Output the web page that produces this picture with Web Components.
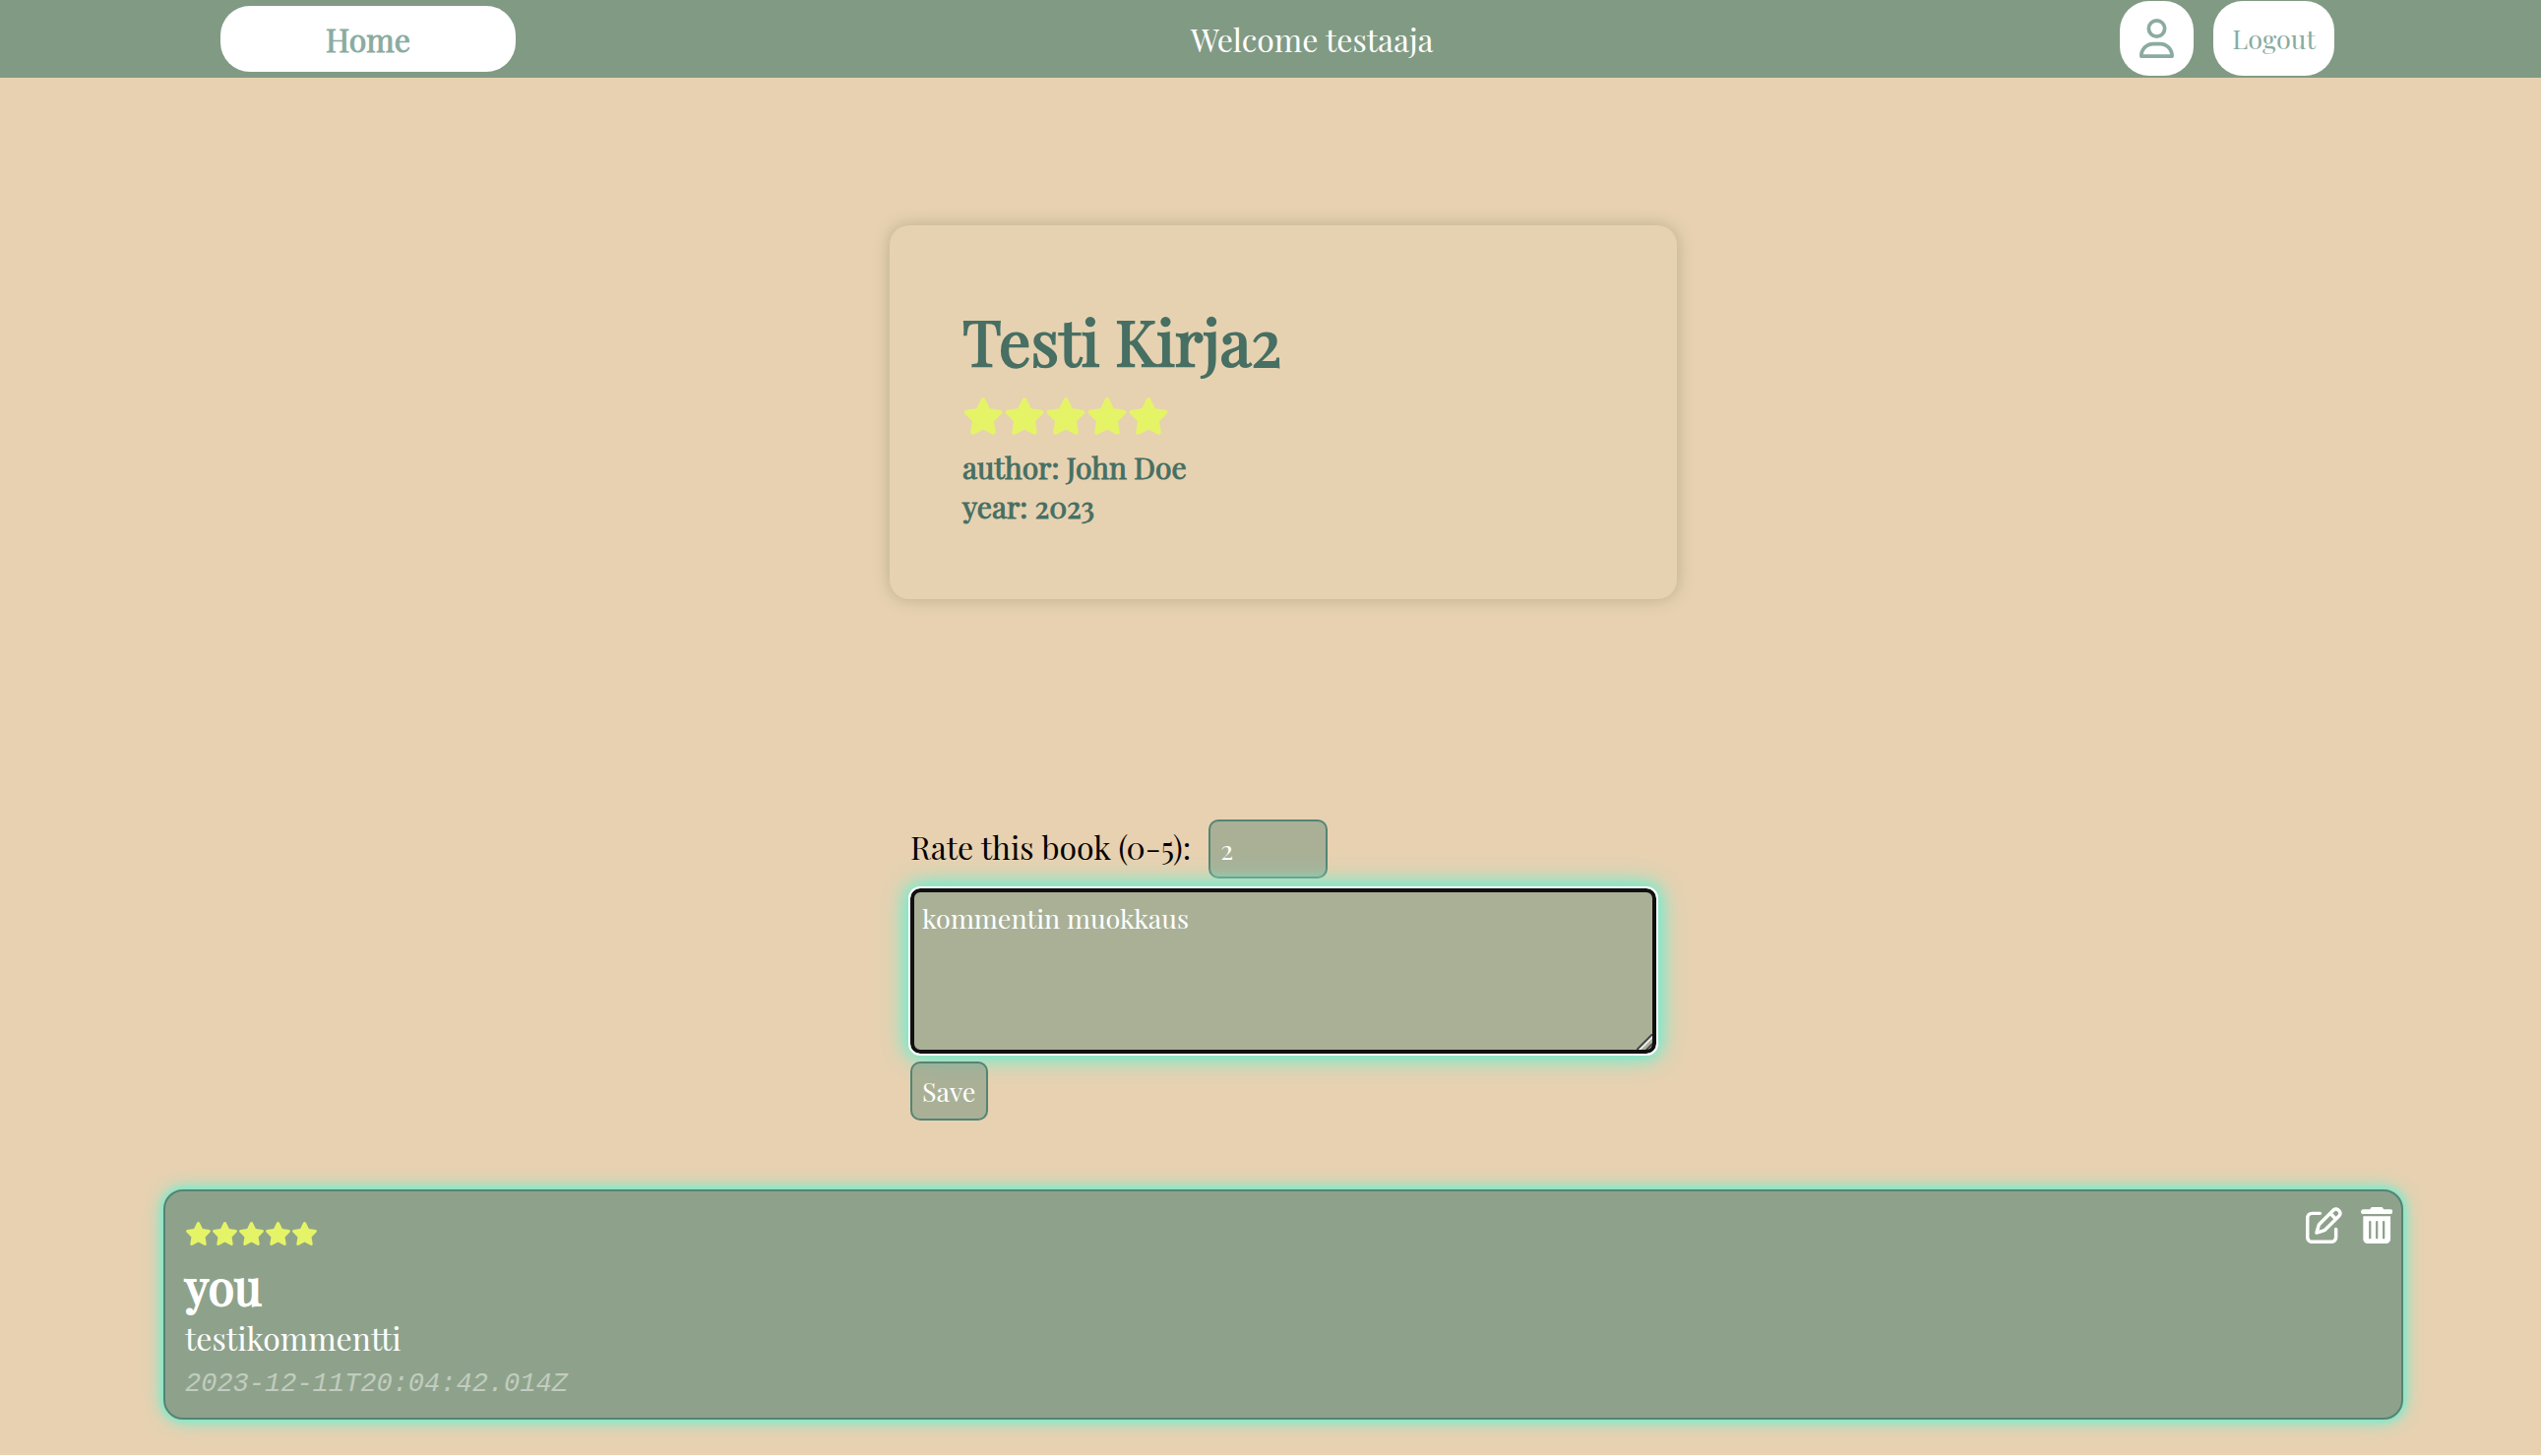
<!DOCTYPE html>
<html lang="en">
<head>
<meta charset="utf-8">
<title>Book review</title>
<style>
  html { background: #fff; }
  body {
    margin: 0;
    font-family: "Playfair Display", "Liberation Serif", serif;
    color: #000;
    --bar: #819a84;
    --sand: #e7d1b1;
    --ink: #476f63;
    --soft: #8aaba1;
    --field: rgba(129, 154, 132, .6);
    --edge: #548474;
    --glow: #73ecce;
    --star: #e5f467;
  }
</style>
</head>
<body>
<book-app></book-app>
<script>
const define = (name, html, setup) => {
  const template = document.createElement('template');
  template.innerHTML = html;
  customElements.define(name, class extends HTMLElement {
    constructor() {
      super();
      this.attachShadow({ mode: 'open' }).append(template.content.cloneNode(true));
    }
    connectedCallback() { if (setup) setup(this, this.shadowRoot); }
  });
};

const STAR = '<svg viewBox="0 0 576 512" aria-hidden="true"><path d="M316.9 18C311.6 7 300.4 0 288.1 0s-23.4 7-28.8 18L195 150.3 51.4 171.5c-12 1.8-22 10.2-25.7 21.7s-.7 24.2 7.9 32.7L137.8 329 113.2 474.7c-2 12 3 24.2 12.9 31.3s23 8 33.8 2.3l128.3-68.5 128.3 68.5c10.8 5.7 23.9 4.9 33.8-2.3s14.9-19.3 12.9-31.3L438.5 329 542.7 225.9c8.6-8.5 11.7-21.2 7.9-32.7s-13.7-19.9-25.7-21.7L381.2 150.3 316.9 18z"/></svg>';

define('star-rating', `
  <style>
    :host { display: block; }
    .stars { display: flex; }
    svg { width: var(--star-width, 27px); height: var(--star-height, 24px); fill: var(--star); display: block; }
  </style>
  <div class="stars" role="img"></div>`,
  (host, root) => {
    const value = Number(host.getAttribute('value'));
    const stars = root.querySelector('.stars');
    stars.setAttribute('aria-label', value + ' of 5');
    stars.innerHTML = STAR.repeat(value);
  });

define('top-bar', `
  <style>
    :host { display: flex; justify-content: space-between; align-items: center; background: var(--bar); padding: 1px 210px 2px 224px; }
    a, button { box-sizing: border-box; background: #fff; color: var(--soft); border: 0; border-radius: 30px; font-family: inherit; line-height: 36px; text-align: center; text-decoration: none; }
    .home { width: 300px; padding: 16px 20px 15px; font-size: 32px; -webkit-text-stroke: 1px currentColor; }
    .welcome { color: #fff; font-size: 32px; line-height: 40px; padding: 2px 12px 0 0; }
    .account { display: flex; gap: 20px; }
    .user { display: flex; align-items: center; padding: 18px 20px; }
    .user svg { width: 35px; height: 40px; fill: currentColor; display: block; }
    .logout { padding: 20px 19px; font-size: 27px; }
  </style>
  <a class="home" href="#">Home</a>
  <span class="welcome"><slot></slot></span>
  <div class="account">
    <a class="user" href="#" aria-label="Profile"><svg viewBox="0 0 448 512" aria-hidden="true"><path d="M304 128a80 80 0 1 0-160 0 80 80 0 1 0 160 0zM96 128a128 128 0 1 1 256 0A128 128 0 1 1 96 128zM49.3 464H398.7c-8.9-63.3-63.3-112-129-112H178.3c-65.7 0-120.1 48.7-129 112zM0 482.3C0 383.8 79.8 304 178.3 304h91.4C368.2 304 448 383.8 448 482.3c0 16.4-13.3 29.7-29.7 29.7H29.7C13.3 512 0 498.7 0 482.3z"/></svg></a>
    <button class="logout" type="button">Logout</button>
  </div>`);

define('book-card', `
  <style>
    :host { display: block; box-sizing: border-box; width: 100%; max-width: 800px; padding: 77px 74px 74px; border-radius: 20px; background: #e6d2b1; box-shadow: 0 0 16px rgba(129, 130, 90, .45); color: var(--ink); }
    h1 { margin: 0; font-size: 64px; line-height: 80px; font-weight: normal; -webkit-text-stroke: 2px currentColor; }
    star-rating { --star-width: 42px; --star-height: 38px; margin: 18px 0 13px; }
    ::slotted(p) { margin: 0; font-size: 30px; line-height: 40px; -webkit-text-stroke: 1px currentColor; }
  </style>
  <h1><slot name="title"></slot></h1>
  <star-rating value="5"></star-rating>
  <slot></slot>`);

define('rating-form', `
  <style>
    :host { display: block; width: 100%; max-width: 758px; }
    form { display: flex; flex-direction: column; align-items: flex-start; }
    .row { display: flex; align-items: baseline; gap: 18px; margin-bottom: 10px; }
    label { font-size: 32px; line-height: 40px; }
    input, textarea, button { box-sizing: border-box; margin: 0; font-family: inherit; font-size: 27px; line-height: 36px; color: #fff; background: var(--field); border: 2px solid var(--edge); border-radius: 10px; }
    input { width: 121px; height: 60px; padding: 0 10px; appearance: textfield; }
    textarea { display: block; width: 100%; height: 168px; padding: 8px; border: 4px solid #101010; outline: 2px solid #fff; box-shadow: 0 0 30px var(--glow), 0 0 16px 4px var(--glow); margin-bottom: 8px;
      background: linear-gradient(135deg, transparent 10px, #444 11px, #444 12px, #eee 13px, #eee 14px, transparent 15px, transparent 17px, #444 18px, #444 19px, #eee 20px, #eee 21px, #444 22px) right bottom / 16px 16px no-repeat, var(--field); }
    textarea::-webkit-resizer { background: transparent; }
    button { padding: 10px; position: relative; }
  </style>
  <form>
    <div class="row">
      <label for="rating">Rate this book (0-5):</label>
      <input id="rating" type="number" min="0" max="5" value="2">
    </div>
    <textarea aria-label="Comment">kommentin muokkaus</textarea>
    <button type="button">Save</button>
  </form>`);

define('comment-card', `
  <style>
    :host { display: flex; justify-content: space-between; align-items: flex-start; box-sizing: border-box; width: 100%; padding: 16px 9px 10px 20px; border: 2px solid var(--edge); border-radius: 20px; background: #8ea28b; box-shadow: 0 0 20px var(--glow), 0 0 8px 1px var(--glow); color: #fff; }
    .body { padding-top: 15px; }
    h2 { margin: 11px 0 0; font-size: 48px; line-height: 60px; font-weight: normal; -webkit-text-stroke: 2px currentColor; }
    p { margin: 0; font-size: 32px; line-height: 46px; }
    time { display: block; font: italic 27px/48px "Liberation Mono", monospace; color: #c1ccbf; }
    .actions { display: flex; gap: 19px; }
    button { border: 0; padding: 0; background: none; color: inherit; }
    svg { display: block; height: 37px; fill: currentColor; }
  </style>
  <div class="body">
    <star-rating value="5"></star-rating>
    <h2><slot name="author"></slot></h2>
    <p><slot></slot></p>
    <time><slot name="time"></slot></time>
  </div>
  <div class="actions">
    <button type="button" aria-label="Edit"><svg viewBox="0 0 512 512" aria-hidden="true"><path d="M441 58.9L453.1 71c9.4 9.4 9.4 24.6 0 33.9L424 134.1 377.9 88 407 58.9c9.4-9.4 24.6-9.4 33.9 0zM209.8 256.2L344 121.9 390.1 168 255.8 302.2c-2.9 2.9-6.5 5-10.4 6.1l-58.5 16.7 16.7-58.5c1.1-3.9 3.2-7.5 6.1-10.4zM373.1 25L175.8 222.2c-8.7 8.7-15 19.4-18.3 31.1l-28.6 100c-2.4 8.4-.1 17.4 6.1 23.6s15.2 8.5 23.6 6.1l100-28.6c11.8-3.4 22.5-9.7 31.1-18.3L487 138.9c28.1-28.1 28.1-73.7 0-101.8L474.9 25C446.8-3.1 401.2-3.1 373.1 25zM88 64C39.4 64 0 103.4 0 152V424c0 48.6 39.4 88 88 88H360c48.6 0 88-39.4 88-88V312c0-13.3-10.7-24-24-24s-24 10.7-24 24V424c0 22.1-17.9 40-40 40H88c-22.1 0-40-17.9-40-40V152c0-22.1 17.9-40 40-40H200c13.3 0 24-10.7 24-24s-10.7-24-24-24H88z"/></svg></button>
    <button type="button" aria-label="Delete"><svg viewBox="0 0 448 512" aria-hidden="true"><path d="M135.2 17.7C140.6 6.8 151.7 0 163.8 0H284.2c12.1 0 23.2 6.8 28.6 17.7L320 32h96c17.7 0 32 14.3 32 32s-14.3 32-32 32H32C14.3 96 0 81.7 0 64S14.3 32 32 32h96l7.2-14.3zM32 128H416V448c0 35.3-28.7 64-64 64H96c-35.3 0-64-28.7-64-64V128zm96 64c-8.8 0-16 7.2-16 16V432c0 8.8 7.2 16 16 16s16-7.2 16-16V208c0-8.8-7.2-16-16-16zm96 0c-8.8 0-16 7.2-16 16V432c0 8.8 7.2 16 16 16s16-7.2 16-16V208c0-8.8-7.2-16-16-16zm96 0c-8.8 0-16 7.2-16 16V432c0 8.8 7.2 16 16 16s16-7.2 16-16V208c0-8.8-7.2-16-16-16z"/></svg></button>
  </div>`);

define('book-app', `
  <style>
    :host { display: block; background: var(--sand); }
    main { display: flex; flex-direction: column; align-items: center; padding: 150px 140px 36px 166px; }
    book-card { margin-bottom: 224px; }
    rating-form { margin-bottom: 70px; }
  </style>
  <top-bar>Welcome testaaja</top-bar>
  <main>
    <book-card>
      <span slot="title">Testi Kirja2</span>
      <p>author: John Doe</p>
      <p>year: 2023</p>
    </book-card>
    <rating-form></rating-form>
    <comment-card>
      <span slot="author">you</span>
      testikommentti
      <span slot="time">2023-12-11T20:04:42.014Z</span>
    </comment-card>
  </main>`);
</script>
</body>
</html>
